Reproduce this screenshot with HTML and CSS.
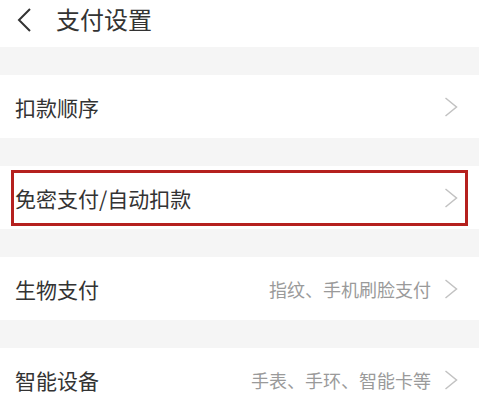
FILE: index.html
```html
<!DOCTYPE html>
<html lang="zh-CN">
<head>
<meta charset="utf-8">
<link rel="stylesheet" href="styles.css">
</head>
<body>
<div class="page">
  <header class="topbar">
    <svg class="back" width="16" height="24" viewBox="0 0 16 24"><path d="M14 1 L3 12 L14 23" fill="none" stroke="#333" stroke-width="2"/></svg>
    <span class="title">支付设置</span>
  </header>
  <div class="gap"></div>
  <div class="row"><span class="label">扣款顺序</span><svg class="chev" width="14" height="20" viewBox="0 0 14 20"><path d="M1.5 1 L12.5 10 L1.5 19" fill="none" stroke="#c2c2c2" stroke-width="1.5"/></svg></div>
  <div class="gap"></div>
  <div class="row highlighted"><span class="label">免密支付/自动扣款</span><svg class="chev" width="14" height="20" viewBox="0 0 14 20"><path d="M1.5 1 L12.5 10 L1.5 19" fill="none" stroke="#c2c2c2" stroke-width="1.5"/></svg></div>
  <div class="gap"></div>
  <div class="row"><span class="label">生物支付</span><span class="value">指纹、手机刷脸支付</span><svg class="chev" width="14" height="20" viewBox="0 0 14 20"><path d="M1.5 1 L12.5 10 L1.5 19" fill="none" stroke="#c2c2c2" stroke-width="1.5"/></svg></div>
  <div class="gap"></div>
  <div class="row"><span class="label">智能设备</span><span class="value">手表、手环、智能卡等</span><svg class="chev" width="14" height="20" viewBox="0 0 14 20"><path d="M1.5 1 L12.5 10 L1.5 19" fill="none" stroke="#c2c2c2" stroke-width="1.5"/></svg></div>
</div>
</body>
</html>
```
FILE: styles.css
```css
html, body {
  margin: 0;
  padding: 0;
  background: #f5f5f5;
}
.page {
  width: 479px;
  height: 404px;
  overflow: hidden;
  font-family: "Noto Sans CJK SC", "Noto Sans", sans-serif;
  color: #333;
}
.topbar {
  height: 47px;
  background: #fff;
  display: flex;
  align-items: center;
  padding-left: 16px;
  box-sizing: border-box;
}
.back {
  margin-top: -8px;
}
.title {
  font-size: 24px;
  margin-left: 24px;
  margin-top: -10px;
  color: #333;
}
.gap {
  height: 28px;
}
.row {
  position: relative;
  height: 63px;
  background: #fff;
  display: flex;
  align-items: center;
  padding: 0 21px 0 15px;
  box-sizing: border-box;
}
.label {
  font-size: 21px;
  flex: 1;
  color: #333;
}
.value {
  font-size: 18px;
  color: #9a9a9a;
  margin-right: 13px;
}
.chev {
  display: block;
}
.highlighted::after {
  content: "";
  position: absolute;
  left: 11px;
  right: 11px;
  top: 4px;
  bottom: 3px;
  border: 3px solid #b5201e;
}
```
